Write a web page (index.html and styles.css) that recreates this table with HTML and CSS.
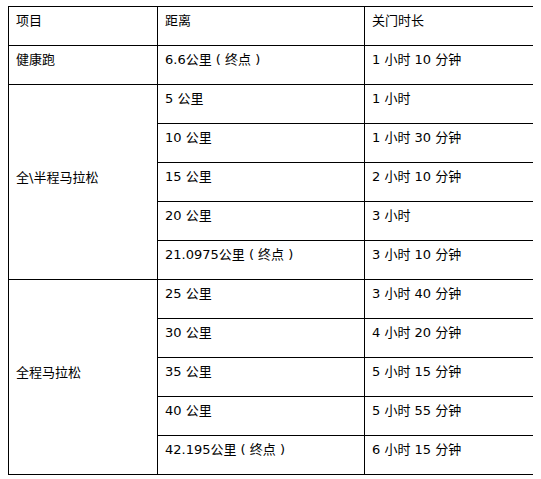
FILE: index.html
```html
<!DOCTYPE html>
<html lang="zh">
<head>
<meta charset="utf-8">
<link rel="stylesheet" href="styles.css">
</head>
<body>
<table class="limits">
  <colgroup>
    <col class="c1"><col class="c2"><col class="c3">
  </colgroup>
  <tr><td>项目</td><td>距离</td><td>关门时长</td></tr>
  <tr><td>健康跑</td><td>6.6公里 ( 终点 )</td><td>1 小时 10 分钟</td></tr>
  <tr><td rowspan="5" class="mid">全\半程马拉松</td><td>5 公里</td><td>1 小时</td></tr>
  <tr><td>10 公里</td><td>1 小时 30 分钟</td></tr>
  <tr><td>15 公里</td><td>2 小时 10 分钟</td></tr>
  <tr><td>20 公里</td><td>3 小时</td></tr>
  <tr><td>21.0975公里 ( 终点 )</td><td>3 小时 10 分钟</td></tr>
  <tr><td rowspan="5" class="mid">全程马拉松</td><td>25 公里</td><td>3 小时 40 分钟</td></tr>
  <tr><td>30 公里</td><td>4 小时 20 分钟</td></tr>
  <tr><td>35 公里</td><td>5 小时 15 分钟</td></tr>
  <tr><td>40 公里</td><td>5 小时 55 分钟</td></tr>
  <tr><td>42.195公里 ( 终点 )</td><td>6 小时 15 分钟</td></tr>
</table>
</body>
</html>
```
FILE: styles.css
```css
html, body {
  background: #fff;
}
body {
  margin: 6px 8px;
  font-family: "DejaVu Sans", "Noto Sans CJK SC", sans-serif;
  font-size: 13px;
  color: #000;
}
.limits {
  border-collapse: collapse;
  width: 529px;
  table-layout: fixed;
}
.c1 { width: 149px; }
.c2 { width: 207px; }
.c3 { width: 173px; }
.limits td {
  border: 1px solid #000;
  height: 39px;
  box-sizing: border-box;
  padding: 4px 7px 0;
  line-height: 19px;
  vertical-align: top;
  white-space: nowrap;
}
.limits td.mid {
  vertical-align: middle;
  padding: 0 7px 10px;
}
```
